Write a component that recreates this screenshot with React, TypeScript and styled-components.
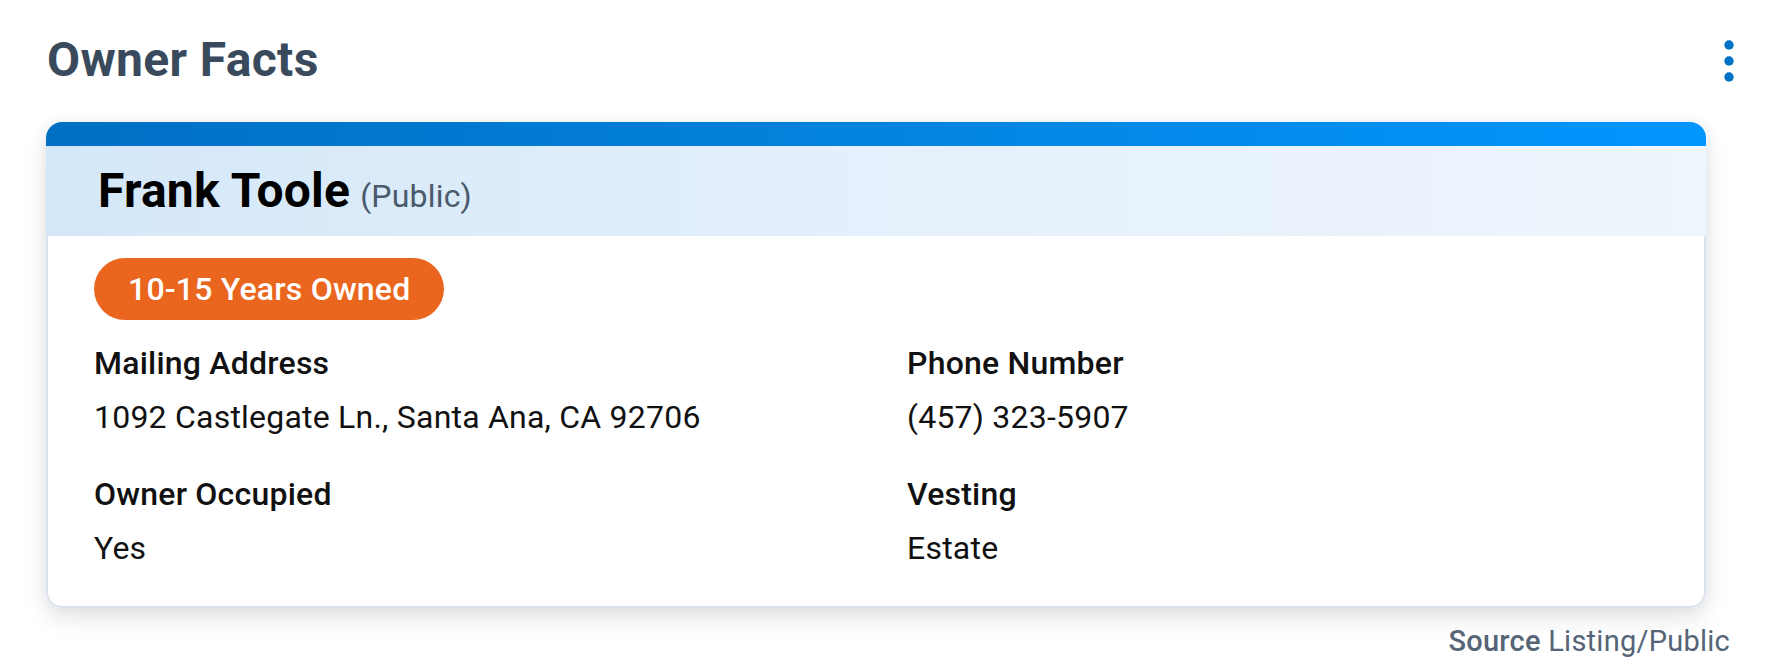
import React from "react";
import styled, { createGlobalStyle } from "styled-components";

const GlobalStyle = createGlobalStyle`
  html, body {
    margin: 0;
    padding: 0;
    background: #ffffff;
  }
  body {
    font-family: Roboto, "Noto Sans", "Liberation Sans", sans-serif;
    color: #111;
  }
  * { box-sizing: border-box; }
`;

const Page = styled.div`
  width: 1778px;
  padding: 32px 43px 0 46px;
`;

const TitleRow = styled.div`
  display: flex;
  align-items: center;
  justify-content: space-between;
  height: 56px;
`;

const Title = styled.h1`
  margin: 0;
  font-size: 48px;
  line-height: 56px;
  font-weight: 700;
  letter-spacing: 0.35px;
  color: #3a4a5d;
  padding-left: 1px;
`;

const MenuButton = styled.button`
  display: flex;
  align-items: center;
  justify-content: center;
  width: 12px;
  height: 44px;
  padding: 0;
  border: none;
  background: transparent;
  cursor: pointer;
  margin-top: 2px;
`;

const Card = styled.section`
  margin: 34px 29px 0 0;
  border-radius: 16px;
  overflow: hidden;
  background: #fff;
  box-shadow: 0 10px 22px rgba(30, 40, 60, 0.12), 0 0 14px rgba(30, 40, 60, 0.05);
`;

const TopBar = styled.div`
  height: 24px;
  background: linear-gradient(90deg, #006fc3 0%, #0383de 50%, #0396ff 100%);
`;

const Inner = styled.div`
  border: 2px solid #dbe2ec;
  border-top: none;
  border-radius: 0 0 16px 16px;
`;

const Header = styled.div`
  display: flex;
  align-items: baseline;
  height: 90px;
  padding: 17px 48px 0 52px;
  margin: 0 -2px;
  background: linear-gradient(90deg, #d4e7f8 0%, #e4f0fb 50%, #eef5fd 100%);
`;

const Name = styled.span`
  font-size: 48px;
  line-height: 56px;
  font-weight: 700;
  letter-spacing: 0.2px;
  color: #000;
`;

const Visibility = styled.span`
  margin-left: 10px;
  font-size: 32px;
  font-weight: 400;
  letter-spacing: 0.2px;
  color: #4a5a6c;
`;

const Body = styled.div`
  padding: 22px 46px 34px 46px;
`;

const Badge = styled.span`
  display: inline-flex;
  align-items: center;
  height: 62px;
  padding: 0 34px;
  border-radius: 31px;
  background: #ea661e;
  color: #fff;
  font-size: 32px;
  font-weight: 500;
  letter-spacing: 0.2px;
  line-height: 62px;
`;

const FieldGrid = styled.dl`
  display: grid;
  grid-template-columns: 813px 1fr;
  row-gap: 29px;
  margin: 19px 0 0 0;
`;

const Field = styled.div`
  display: flex;
  flex-direction: column;
  gap: 6px;
`;

const Label = styled.dt`
  font-size: 32px;
  line-height: 48px;
  font-weight: 500;
  letter-spacing: 0.22px;
  color: #111;
`;

const Value = styled.dd`
  margin: 0;
  font-size: 32px;
  line-height: 48px;
  font-weight: 400;
  letter-spacing: 0.22px;
  color: #111;
`;

const Source = styled.p`
  margin: 13px 5px 0 0;
  text-align: right;
  font-size: 29px;
  line-height: 40px;
  letter-spacing: 0.25px;
  color: #556477;
`;

const SourceKey = styled.strong`
  font-weight: 500;
`;

const fields = [
  { label: "Mailing Address", value: "1092 Castlegate Ln., Santa Ana, CA 92706" },
  { label: "Phone Number", value: "(457) 323-5907" },
  { label: "Owner Occupied", value: "Yes" },
  { label: "Vesting", value: "Estate" },
];

const DotsIcon = () => (
  <svg width="10" height="42" viewBox="0 0 10 42" aria-hidden="true">
    <circle cx="5" cy="5" r="4.7" fill="#0070c4" />
    <circle cx="5" cy="21" r="4.7" fill="#0070c4" />
    <circle cx="5" cy="37" r="4.7" fill="#0070c4" />
  </svg>
);

export default function App() {
  return (
    <>
      <GlobalStyle />
      <Page>
        <TitleRow>
          <Title>Owner Facts</Title>
          <MenuButton aria-label="More options">
            <DotsIcon />
          </MenuButton>
        </TitleRow>
        <Card>
          <TopBar />
          <Inner>
            <Header>
              <Name>Frank Toole</Name>
              <Visibility>(Public)</Visibility>
            </Header>
            <Body>
              <Badge>10-15 Years Owned</Badge>
              <FieldGrid>
                {fields.map((f) => (
                  <Field key={f.label}>
                    <Label>{f.label}</Label>
                    <Value>{f.value}</Value>
                  </Field>
                ))}
              </FieldGrid>
            </Body>
          </Inner>
        </Card>
        <Source>
          <SourceKey>Source</SourceKey> Listing/Public
        </Source>
      </Page>
    </>
  );
}
